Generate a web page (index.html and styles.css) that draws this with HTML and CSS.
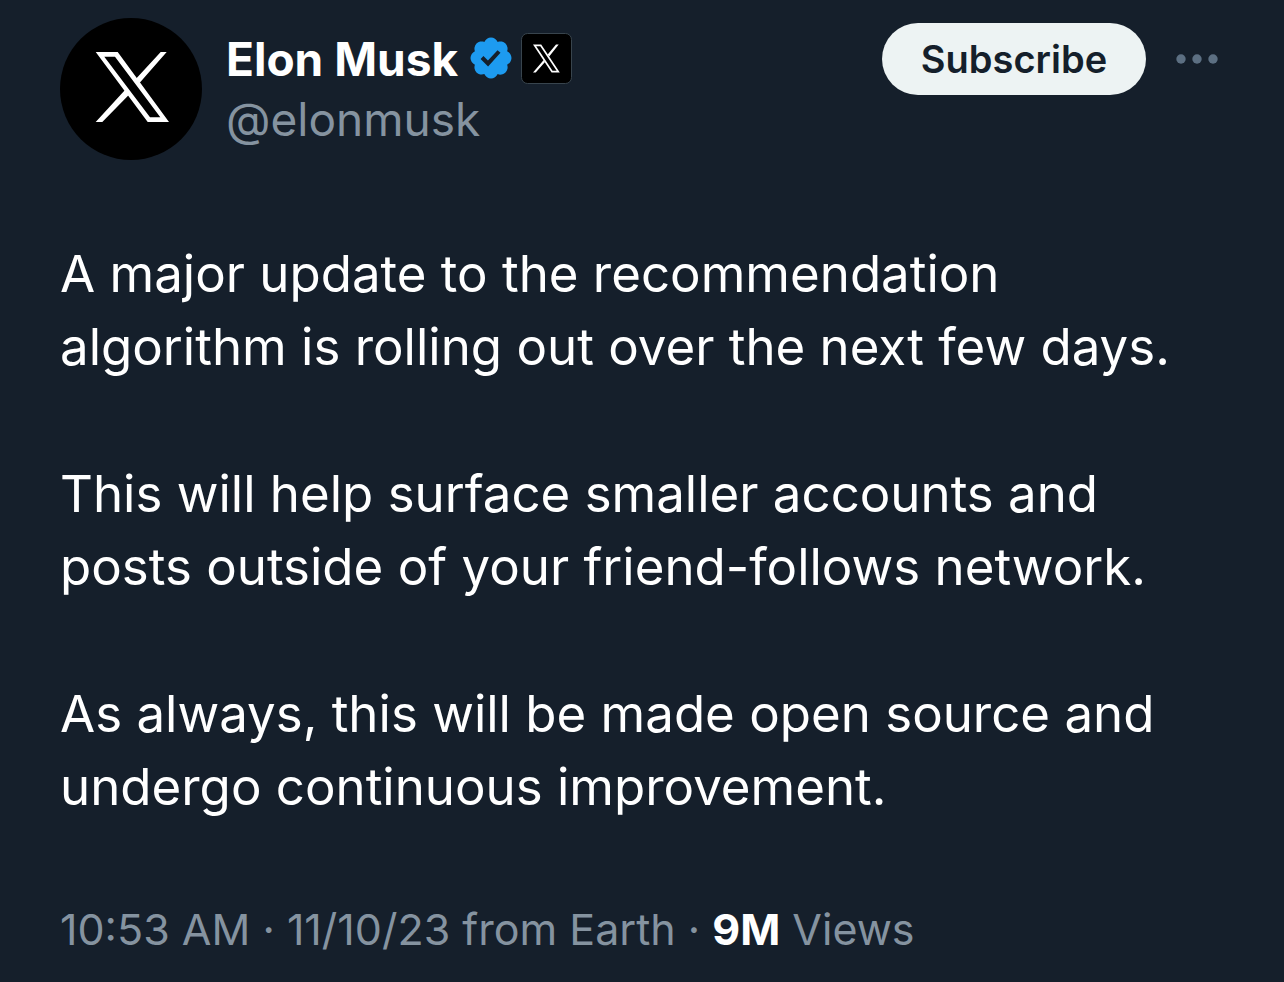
FILE: index.html
```html
<!DOCTYPE html>
<html lang="en">
<head>
<meta charset="utf-8">
<meta name="viewport" content="width=device-width, initial-scale=1">
<title>Elon Musk on X</title>
<link rel="stylesheet" href="styles.css">
</head>
<body>
<article class="post">
  <header class="post-header">
    <svg class="avatar" viewBox="0 0 142 142" aria-hidden="true">
      <circle cx="71" cy="71" r="71" fill="#000"/>
      <path d="M35.700 34H57.700L109 104H87.700ZM44.300 38.700L90 99.300H100.300L55 38.700Z" fill="#fff" fill-rule="evenodd"/>
      <path d="M100.700 34H106.700L79.500 65L76 60.700ZM35.700 104H42.300L69 76.700L65 72Z" fill="#fff"/>
    </svg>
    <div class="author">
      <div class="name-row">
        <h1 class="name">Elon Musk</h1>
        <svg class="verified" viewBox="0 0 22 22" role="img" aria-label="Verified">
          <path fill="#1d9bf0" d="M20.396 11c-.018-.646-.215-1.275-.57-1.816-.354-.54-.852-.972-1.438-1.246.223-.607.27-1.264.14-1.897-.131-.634-.437-1.218-.882-1.687-.47-.445-1.053-.75-1.687-.882-.633-.13-1.290-.083-1.897.14-.273-.587-.704-1.086-1.245-1.440S11.647 1.620 11 1.604c-.646.017-1.273.213-1.813.568s-.969.854-1.240 1.440c-.608-.223-1.267-.272-1.902-.14-.635.130-1.220.436-1.690.882-.445.470-.749 1.055-.878 1.688-.130.633-.080 1.290.144 1.896-.587.274-1.087.705-1.443 1.245-.356.540-.555 1.170-.574 1.817.020.647.218 1.276.574 1.817.356.540.856.972 1.443 1.245-.224.606-.274 1.263-.144 1.896.130.634.433 1.218.877 1.688.470.443 1.054.747 1.687.878.633.132 1.290.084 1.897-.136.274.586.705 1.084 1.246 1.439.540.354 1.170.551 1.816.569.647-.016 1.276-.213 1.817-.567s.972-.854 1.245-1.440c.604.239 1.266.296 1.903.164.636-.132 1.220-.447 1.680-.907.460-.460.776-1.044.908-1.681s.075-1.299-.165-1.903c.586-.274 1.084-.705 1.439-1.246.354-.540.551-1.170.569-1.816z"/>
          <path fill="#151f2b" d="M9.662 14.850l-3.429-3.428 1.293-1.302 2.072 2.072 4.400-4.794 1.347 1.246z"/>
        </svg>
        <svg class="affiliate" viewBox="0 0 51 51" role="img" aria-label="X">
          <rect x=".5" y=".5" width="50" height="50" rx="6" fill="#000" stroke="#38444d"/>
          <path d="M12 11.500H20.200L38.800 39.500H30.600ZM15.200 13.200L31.500 37.800H35.600L19.300 13.200Z" fill="#fff" fill-rule="evenodd"/>
          <path d="M35 11.500H37.700L28.200 23.500L26.700 21.500ZM12 39.500H14.700L24 29L22.700 27Z" fill="#fff"/>
        </svg>
      </div>
      <p class="handle">@elonmusk</p>
    </div>
    <div class="actions">
      <button class="subscribe" type="button">Subscribe</button>
      <button class="more" type="button" aria-label="More">
        <svg class="dots" viewBox="0 0 42 10" fill="#5c6f82" aria-hidden="true"><circle cx="5" cy="5" r="4.700"/><circle cx="21" cy="5" r="4.700"/><circle cx="37" cy="5" r="4.700"/></svg>
      </button>
    </div>
  </header>
  <div class="content">
    <p>A major update to the recommendation<br>algorithm is rolling out over the next few days.</p>
    <p>This will help surface smaller accounts and<br>posts outside of your friend-follows network.</p>
    <p>As always, this will be made open source and<br>undergo continuous improvement.</p>
  </div>
  <footer class="meta">10:53 AM · 11/10/23 from Earth · <strong>9M</strong> Views</footer>
</article>
</body>
</html>
```
FILE: styles.css
```css
* { box-sizing: border-box; }
body {
  margin: 0;
  background: #151f2b;
  color: #fff;
  font-family: Inter, "Liberation Sans", sans-serif;
}
p, h1 { margin: 0; }
.post { padding: 18px 66px 0 60px; }
.post-header { display: flex; align-items: flex-start; }
.avatar { width: 142px; height: 142px; flex: none; }
.author { margin-left: 24px; padding-top: 11px; }
.name-row { display: flex; align-items: center; height: 60px; }
.name { font-size: 46px; line-height: 60px; font-weight: 700; white-space: nowrap; }
.verified { width: 48px; height: 48px; margin-left: 9px; }
.affiliate { width: 51px; height: 51px; margin-left: 6px; }
.handle { font-size: 46px; line-height: 60px; color: #8593a0; }
.name-row svg { flex: none; margin-bottom: 2px; }
.actions { display: flex; align-items: center; margin-left: auto; padding-top: 5px; }
.subscribe {
  width: 264px;
  height: 72px;
  padding: 0;
  border: 0;
  border-radius: 36px;
  background: #edf3f3;
  color: #151f2b;
  font: 600 38px/72px Inter, "Liberation Sans", sans-serif;
}
.more { display: flex; margin-left: 30px; padding: 0; border: 0; background: none; }
.dots { width: 42px; height: 10px; }
.content { display: grid; gap: 74px; margin-top: 77px; font-size: 51px; line-height: 73px; white-space: nowrap; }
.meta { margin-top: 76px; font-size: 43px; line-height: 60px; color: #8593a0; white-space: nowrap; }
.meta strong { color: #fff; }
```
